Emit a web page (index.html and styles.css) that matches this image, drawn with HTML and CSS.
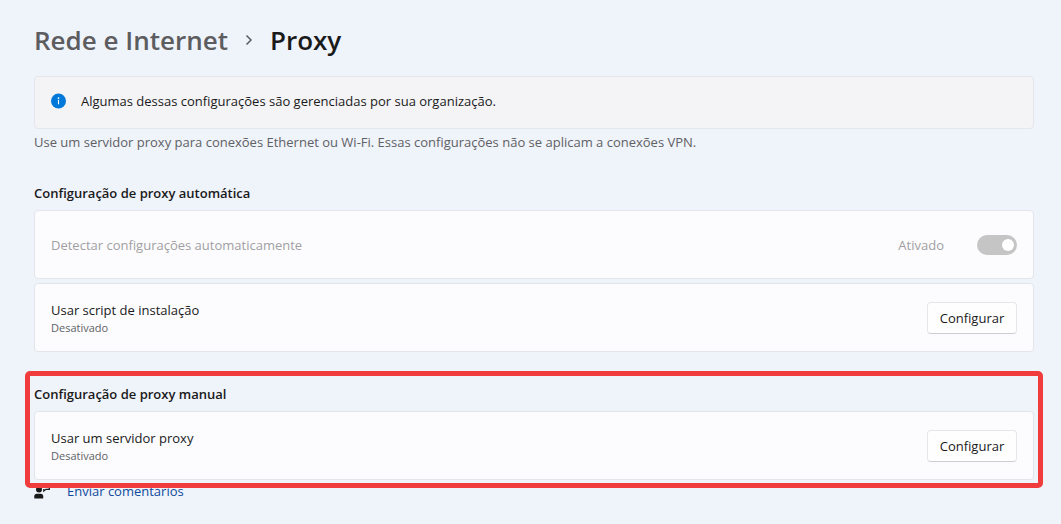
FILE: index.html
```
<!DOCTYPE html>
<html lang="pt-BR">
<head>
    <meta charset="UTF-8">
    <meta name="viewport" content="width=device-width, initial-scale=1.0">
    <title>Proxy</title>
    <link rel="stylesheet" href="styles.css">
</head>
<body>
    <main>
        <h1 class="breadcrumb">
            <a href="#">Rede e Internet</a>
            <svg width="10" height="12" viewBox="0 0 10 12" aria-hidden="true">
                <path d="M2.5 1.5 7 6 2.5 10.5" fill="none" stroke="currentColor" stroke-width="1.5"/>
            </svg>
            <span>Proxy</span>
        </h1>

        <div class="banner">
            <svg width="16" height="16" viewBox="0 0 16 16" aria-hidden="true">
                <circle cx="7.5" cy="8" r="7.5" fill="#0078d9"/>
                <circle cx="7.5" cy="5.1" r="0.9" fill="#fff"/>
                <path d="M7.5 6.8V11.3" stroke="#fff" stroke-width="1.1"/>
            </svg>
            <span>Algumas dessas configurações são gerenciadas por sua organização.</span>
        </div>
        <p class="intro">Use um servidor proxy para conexões Ethernet ou Wi-Fi. Essas configurações não se aplicam a conexões VPN.</p>

        <section>
            <h2>Configuração de proxy automática</h2>
            <div class="card disabled">
                <label for="detect">Detectar configurações automaticamente</label>
                <div class="switch">
                    <span>Ativado</span>
                    <input type="checkbox" role="switch" id="detect" checked disabled>
                </div>
            </div>
            <div class="card">
                <div>
                    <p class="name">Usar script de instalação</p>
                    <p class="state">Desativado</p>
                </div>
                <button type="button">Configurar</button>
            </div>
        </section>

        <section class="highlight">
            <h2>Configuração de proxy manual</h2>
            <div class="card">
                <div>
                    <p class="name">Usar um servidor proxy</p>
                    <p class="state">Desativado</p>
                </div>
                <button type="button">Configurar</button>
            </div>
        </section>

        <a class="feedback" href="#">
            <svg width="17" height="16" viewBox="0 0 17 16" aria-hidden="true">
                <circle cx="5" cy="6.5" r="3" fill="#1a1a1a"/>
                <path d="M0.3 15.5V13.2Q0.3 10.7 2.8 10.7H6.7Q9.2 10.7 9.2 13.2V15.5Z" fill="#1a1a1a"/>
                <path d="M7.5 1.5H15.3V6.3H12L9.8 8V6" fill="none" stroke="#1a1a1a" stroke-width="1.3"/>
            </svg>
            <span>Enviar comentários</span>
        </a>
    </main>
</body>
</html>
```
FILE: styles.css
```
* {
    box-sizing: border-box;
}
body {
    font-family: "Segoe UI", "Open Sans", sans-serif;
    font-size: 13px;
    line-height: 20px;
    background-color: #eff3fa;
    color: #1a1a1a;
    margin: 0;
}
main {
    padding: 20px 27px 20px 34px;
}
p, h1, h2 {
    margin: 0;
}
.breadcrumb {
    display: flex;
    align-items: center;
    gap: 16px;
    margin-bottom: 16px;
    font-size: 26px;
    font-weight: 600;
    line-height: 40px;
}
.breadcrumb a {
    color: #5d5d5f;
    text-decoration: none;
}
.breadcrumb svg {
    color: #5d5d5f;
}
.banner {
    display: flex;
    align-items: center;
    gap: 14px;
    min-height: 53px;
    padding: 0 16px 3px;
    background-color: #f4f4f6;
    border: 1px solid #e4e6eb;
    border-radius: 4px;
}
.intro {
    margin-top: 3px;
    color: #606164;
}
section {
    margin-top: 31px;
}
h2 {
    margin-bottom: 7px;
    font-size: 13px;
    font-weight: 600;
    line-height: 20px;
}
.card {
    display: flex;
    align-items: center;
    justify-content: space-between;
    min-height: 69px;
    padding: 0 16px;
    background-color: #fcfcfe;
    border: 1px solid #e3e5eb;
    border-radius: 4px;
}
.card + .card {
    margin-top: 4px;
}
.disabled {
    color: #a0a0a2;
}
.state {
    font-size: 11px;
    line-height: 16px;
    color: #606164;
}
.switch {
    display: flex;
    align-items: center;
    gap: 33px;
}
.switch input {
    appearance: none;
    display: flex;
    justify-content: flex-end;
    align-items: center;
    width: 40px;
    height: 20px;
    margin: 0;
    padding: 0 3px;
    background-color: #c5c5c5;
    border-radius: 10px;
}
.switch input::before {
    content: "";
    width: 12px;
    height: 12px;
    background-color: #fff;
    border-radius: 50%;
}
button {
    width: 90px;
    height: 32px;
    padding: 0;
    font: inherit;
    color: inherit;
    background-color: #fefefe;
    border: 1px solid #e6e6e9;
    border-bottom-color: #cfcfd2;
    border-radius: 4px;
}
.highlight {
    position: relative;
    margin-top: 32px;
}
/* red marker drawn around the manual proxy section */
.highlight::after {
    content: "";
    position: absolute;
    inset: -13px -9px -8px;
    border: 5px solid #f03c3c;
    border-radius: 5px;
    pointer-events: none;
}
.feedback {
    display: flex;
    align-items: center;
    gap: 16px;
    width: fit-content;
    margin-top: 1px;
    color: #0f4a9c;
    text-decoration: none;
}
```
